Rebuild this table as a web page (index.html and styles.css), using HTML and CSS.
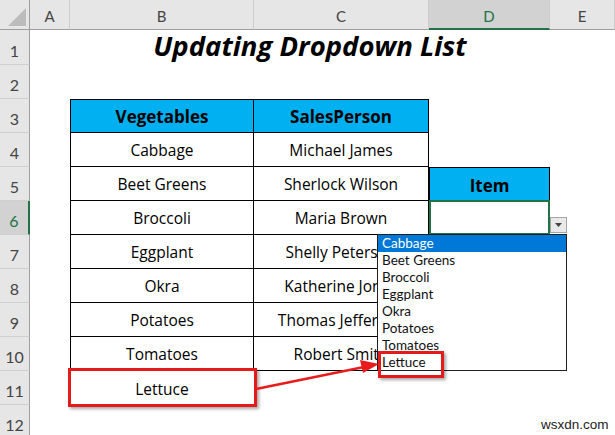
FILE: index.html
```html
<!DOCTYPE html>
<html>
<head>
<meta charset="utf-8">
<link rel="stylesheet" href="styles.css">
</head>
<body>
<div class="sheet">
  <div class="corner"><span class="tri"></span></div>
  <div class="colh">A</div>
  <div class="colh">B</div>
  <div class="colh">C</div>
  <div class="colh sel">D</div>
  <div class="colh">E</div>

  <div class="rowh">1</div>
  <div class="cell"></div>
  <div class="title">Updating Dropdown List</div>
  <div class="cell"></div>

  <div class="rowh">2</div>
  <div class="cell wide"></div>

  <div class="rowh">3</div>
  <div class="cell"></div>
  <div class="tc head first top">Vegetables</div>
  <div class="tc head top">SalesPerson</div>
  <div class="cell"></div>
  <div class="cell"></div>

  <div class="rowh">4</div>
  <div class="cell"></div>
  <div class="tc first">Cabbage</div>
  <div class="tc">Michael James</div>
  <div class="cell"></div>
  <div class="cell"></div>

  <div class="rowh">5</div>
  <div class="cell"></div>
  <div class="tc first">Beet Greens</div>
  <div class="tc">Sherlock Wilson</div>
  <div class="tc head item">Item</div>
  <div class="cell"></div>

  <div class="rowh sel">6</div>
  <div class="cell"></div>
  <div class="tc first">Broccoli</div>
  <div class="tc">Maria Brown</div>
  <div class="active"></div>
  <div class="cell"></div>

  <div class="rowh">7</div>
  <div class="cell"></div>
  <div class="tc first">Eggplant</div>
  <div class="tc">Shelly Peterson</div>
  <div class="cell"></div>
  <div class="cell"></div>

  <div class="rowh">8</div>
  <div class="cell"></div>
  <div class="tc first">Okra</div>
  <div class="tc">Katherine Jones</div>
  <div class="cell"></div>
  <div class="cell"></div>

  <div class="rowh">9</div>
  <div class="cell"></div>
  <div class="tc first">Potatoes</div>
  <div class="tc">Thomas Jefferson</div>
  <div class="cell"></div>
  <div class="cell"></div>

  <div class="rowh">10</div>
  <div class="cell"></div>
  <div class="tc first">Tomatoes</div>
  <div class="tc">Robert Smith</div>
  <div class="cell"></div>
  <div class="cell"></div>

  <div class="rowh">11</div>
  <div class="cell"></div>
  <div class="plain">Lettuce</div>
  <div class="cell"></div>
  <div class="cell"></div>
  <div class="cell"></div>

  <div class="rowh">12</div>
  <div class="cell wide"></div>
</div>

<div class="ddbtn"><svg width="7" height="4" viewBox="0 0 7 4"><path d="M0 0H7L3.5 4Z" fill="#444"/></svg></div>

<ul class="dropdown">
  <li class="hl">Cabbage</li>
  <li>Beet Greens</li>
  <li>Broccoli</li>
  <li>Eggplant</li>
  <li>Okra</li>
  <li>Potatoes</li>
  <li>Tomatoes</li>
  <li>Lettuce</li>
</ul>

<div class="redbox box-b11"></div>
<div class="redbox box-list"></div>

<svg class="arrow" width="615" height="435" viewBox="0 0 615 435">
  <line x1="256" y1="389" x2="364" y2="367" stroke="#e81c1c" stroke-width="2.5"/>
  <path d="M379 364 L360 360 L363 373 Z" fill="#e81c1c"/>
</svg>

<div class="mark">wsxdn.com</div>
</body>
</html>
```

FILE: styles.css
```css
* { box-sizing: border-box; }
html, body {
  margin: 0;
  padding: 0;
  width: 615px;
  height: 435px;
  overflow: hidden;
  background: #fff;
}
body {
  position: relative;
  font-family: "Open Sans", "Noto Sans", sans-serif;
  color: #000;
}
.sheet {
  display: grid;
  grid-template-columns: 30px 40px 184px 175px 121px 65px;
  grid-template-rows: 30px 35px 34px repeat(10, 34px);
  width: 615px;
}
.corner {
  background: #e6e6e6;
  border-right: 1px solid #9e9e9e;
  border-bottom: 1px solid #9e9e9e;
  position: relative;
}
.tri {
  position: absolute;
  right: 3px;
  bottom: 3px;
  width: 0;
  height: 0;
  border-left: 18px solid transparent;
  border-bottom: 18px solid #bcbcbc;
}
.colh {
  background: #e6e6e6;
  border-right: 1px solid #cdcdcd;
  border-bottom: 1px solid #9e9e9e;
  display: flex;
  align-items: center;
  justify-content: center;
  font-family: Lato, sans-serif;
  font-size: 15px;
  color: #444;
  padding-top: 3px;
}
.colh.sel {
  background: #d2d2d2;
  color: #217346;
  border-bottom: 2px solid #217346;
}
.rowh {
  grid-column: 1;
  background: #e6e6e6;
  border-right: 1px solid #9e9e9e;
  border-bottom: 1px solid #d0d0d0;
  display: flex;
  align-items: flex-end;
  justify-content: center;
  font-family: Lato, sans-serif;
  font-size: 16px;
  line-height: 20px;
  padding-bottom: 3px;
  color: #444;
}
.rowh.sel {
  background: #d2d2d2;
  color: #217346;
  border-right: 2px solid #217346;
}
.cell { background: #fff; }
.wide { grid-column: 2 / 7; }
.title {
  grid-column: 3 / 6;
  display: flex;
  align-items: center;
  justify-content: center;
  font-size: 27.5px;
  font-weight: 700;
  font-style: italic;
  white-space: nowrap;
  padding-bottom: 4px;
}
.tc {
  display: flex;
  align-items: center;
  justify-content: center;
  font-size: 15.5px;
  white-space: nowrap;
  border-right: 1px solid #000;
  border-bottom: 1px solid #000;
  padding-top: 1px;
}
.tc.first { border-left: 1px solid #000; }
.tc.top { border-top: 1px solid #000; }
.tc.head {
  background: #00b0f0;
  font-weight: 700;
  font-size: 17px;
}
.tc.item {
  border-left: 1px solid #000;
  border-top: 1px solid #000;
  border-bottom: none;
}
.active {
  border: 2px solid #217346;
  margin-top: -1px;
}
.plain {
  display: flex;
  align-items: center;
  justify-content: center;
  font-size: 15.5px;
  padding-top: 1px;
}
.ddbtn {
  position: absolute;
  left: 550px;
  top: 217px;
  width: 17px;
  height: 16px;
  background: #e9e9e9;
  border: 1px solid #a5a5a5;
  display: flex;
  align-items: center;
  justify-content: center;
}
.dropdown {
  position: absolute;
  left: 377px;
  top: 234px;
  width: 190px;
  height: 137px;
  margin: 0;
  padding: 0;
  list-style: none;
  background: #fff;
  border: 1px solid #1f1f1f;
  font-family: Lato, sans-serif;
  font-size: 13.5px;
  line-height: 17px;
  color: #111;
}
.dropdown li { padding-left: 4px; height: 17px; }
.dropdown li.hl {
  background: #0078d7;
  color: #fff;
}
.redbox {
  position: absolute;
  border: 3px solid #e31b1b;
  box-shadow: 2px 2px 3px rgba(0, 0, 0, 0.35);
}
.box-b11 { left: 68px; top: 368px; width: 189px; height: 39px; }
.box-list { left: 378px; top: 351px; width: 66px; height: 27px; }
.arrow {
  position: absolute;
  left: 0;
  top: 0;
  pointer-events: none;
}
.mark {
  position: absolute;
  left: 541px;
  top: 417px;
  font-family: "Liberation Sans", Arial, sans-serif;
  font-size: 13.5px;
  color: #222;
}
```
